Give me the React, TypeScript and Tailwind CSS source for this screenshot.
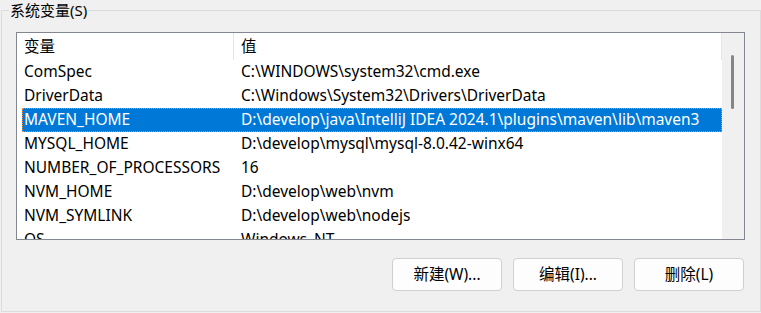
import { useState } from 'react'

interface EnvVar {
  name: string
  value: string
}

const VARS: EnvVar[] = [
  { name: 'ComSpec', value: 'C:\\WINDOWS\\system32\\cmd.exe' },
  { name: 'DriverData', value: 'C:\\Windows\\System32\\Drivers\\DriverData' },
  { name: 'MAVEN_HOME', value: 'D:\\develop\\java\\IntelliJ IDEA 2024.1\\plugins\\maven\\lib\\maven3' },
  { name: 'MYSQL_HOME', value: 'D:\\develop\\mysql\\mysql-8.0.42-winx64' },
  { name: 'NUMBER_OF_PROCESSORS', value: '16' },
  { name: 'NVM_HOME', value: 'D:\\develop\\web\\nvm' },
  { name: 'NVM_SYMLINK', value: 'D:\\develop\\web\\nodejs' },
  { name: 'OS', value: 'Windows_NT' },
]

const FONT = "font-['Noto_Sans','Noto_Sans_CJK_SC',sans-serif]"

export default function App() {
  const [selected, setSelected] = useState('MAVEN_HOME')

  return (
    <div className={`w-[761px] h-[313px] bg-[#f0f0f0] pl-[1px] pt-[10px] text-[15.5px] text-black ${FONT}`}>
      {/* group box */}
      <div className="relative w-[760px] h-[302px] border border-[#dcdcdc]">
        <span className="absolute left-[7px] -top-[11px] bg-[#f0f0f0] pl-[1px] pr-[1px] leading-[20px] text-[15px]">
          系统变量(S)
        </span>

        {/* list view */}
        <div className="ml-[14px] mt-[21px] w-[729px] h-[208px] border border-[#828790] bg-white flex overflow-hidden">
          <div className="flex-1 flex flex-col">
            <div className="flex h-[27px] shrink-0 items-center">
              <div className="w-[217px] h-full pl-[7px] flex items-center border-r border-[#e5e5e5]">变量</div>
              <div className="flex-1 h-full pl-[7px] flex items-center border-r border-[#e5e5e5]">值</div>
            </div>
            {VARS.map(v => {
              const isSel = v.name === selected
              return (
                <div key={v.name} className="pl-[5px] shrink-0">
                  <div
                    onClick={() => setSelected(v.name)}
                    className={`flex h-[24px] items-center whitespace-nowrap border border-dotted ${
                      isSel ? 'bg-[#0078d7] text-white border-[#ff8728]' : 'border-transparent'
                    }`}
                  >
                    <div className="w-[211px] pl-[1px] shrink-0">{v.name}</div>
                    <div className="pl-[7px]">{v.value}</div>
                  </div>
                </div>
              )
            })}
          </div>

          {/* vertical scrollbar */}
          <div className="w-[22px] h-full bg-[#f0f0f0] shrink-0 pt-[22px] pl-[9px]">
            <div className="w-[3px] h-[54px] rounded-full bg-[#858585]" />
          </div>
        </div>

        {/* buttons */}
        <div className="flex justify-end gap-[11px] pr-[16px] mt-[18px]">
          {['新建(W)...', '编辑(I)...', '删除(L)'].map(label => (
            <button
              key={label}
              type="button"
              className="w-[110px] h-[33px] rounded-[4px] border border-[#d0d0d0] bg-[#fdfdfd] flex items-center justify-center"
            >
              {label}
            </button>
          ))}
        </div>
      </div>
    </div>
  )
}
